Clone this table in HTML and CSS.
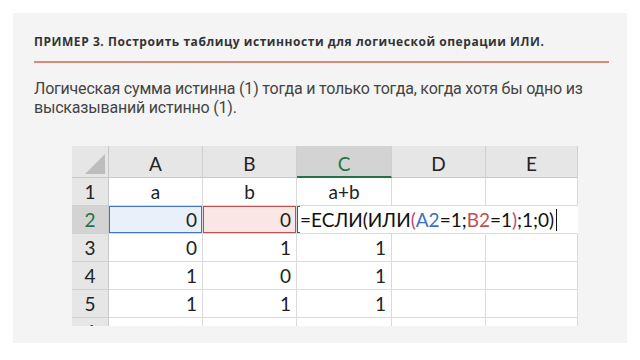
FILE: index.html
```html
<!DOCTYPE html>
<html lang="ru">
<head>
<meta charset="utf-8">
<link rel="stylesheet" href="styles.css">
</head>
<body>
<div class="panel">
  <h1 class="title">ПРИМЕР 3. Построить таблицу истинности для логической операции ИЛИ.</h1>
  <div class="rule"></div>
  <p class="text">Логическая сумма истинна (1) тогда и только тогда, когда хотя бы одно из высказываний истинно (1).</p>
  <div class="sheet">
    <div class="corner"><span class="tri"></span></div>
    <div class="ch">A</div>
    <div class="ch">B</div>
    <div class="ch ch-active">C</div>
    <div class="ch">D</div>
    <div class="ch">E</div>

    <div class="rh">1</div>
    <div class="c center">a</div>
    <div class="c center">b</div>
    <div class="c center">a+b</div>
    <div class="c"></div>
    <div class="c"></div>

    <div class="rh rh-active">2</div>
    <div class="c num ref-a">0</div>
    <div class="c num ref-b">0</div>
    <div class="c edit"><span class="formula">=ЕСЛИ(ИЛИ<span class="pr">(</span><span class="fa">A2</span>=1;<span class="fb">B2</span>=1<span class="pr">)</span>;1;0)<span class="caret"></span></span></div>
    <div class="c nogrid"></div>
    <div class="c nogrid"></div>

    <div class="rh">3</div>
    <div class="c num">0</div>
    <div class="c num">1</div>
    <div class="c num">1</div>
    <div class="c"></div>
    <div class="c"></div>

    <div class="rh">4</div>
    <div class="c num">1</div>
    <div class="c num">0</div>
    <div class="c num">1</div>
    <div class="c"></div>
    <div class="c"></div>

    <div class="rh">5</div>
    <div class="c num">1</div>
    <div class="c num">1</div>
    <div class="c num">1</div>
    <div class="c"></div>
    <div class="c"></div>

    <div class="rh">6</div>
    <div class="c"></div>
    <div class="c"></div>
    <div class="c"></div>
    <div class="c"></div>
    <div class="c"></div>
  </div>
</div>
</body>
</html>
```
FILE: styles.css
```css
html, body {
  margin: 0;
  padding: 0;
  background: #ffffff;
}
body {
  width: 640px;
  height: 360px;
  overflow: hidden;
}
.panel {
  margin: 13px 13px 0 13px;
  height: 330px;
  background: #f4f4f4;
  padding: 22px 18px 0 21px;
  box-sizing: border-box;
}
.title {
  margin: 0;
  font-family: "Open Sans", "Noto Sans", sans-serif;
  font-weight: 700;
  font-size: 12px;
  line-height: 14px;
  color: #333333;
  letter-spacing: 0.55px;
}
.rule {
  margin-top: 12px;
  height: 2px;
  background: #d98a7a;
}
.text {
  margin: 16px 0 0 0;
  font-family: Roboto, "Noto Sans", sans-serif;
  font-size: 16px;
  line-height: 19px;
  color: #444444;
  letter-spacing: -0.2px;
}
.sheet {
  margin: 29px 0 0 38px;
  display: grid;
  grid-template-columns: 37px 94px 94px 95px 94px 92px;
  grid-template-rows: 32px 28px 28px 28px 28px 28px 28px;
  height: 180px;
  width: 506px;
  overflow: hidden;
  background: #ffffff;
  font-family: Lato, "Open Sans", sans-serif;
  font-size: 19px;
  color: #222222;
}
.corner {
  background: #e6e6e6;
  border-right: 1px solid #c8c8c8;
  border-bottom: 1px solid #c8c8c8;
  position: relative;
}
.tri {
  position: absolute;
  right: 3px;
  bottom: 3px;
  width: 0;
  height: 0;
  border-left: 20px solid transparent;
  border-bottom: 20px solid #bdbdbd;
}
.ch {
  background: #e6e6e6;
  border-right: 1px solid #d0d0d0;
  border-bottom: 1px solid #c8c8c8;
  display: flex;
  align-items: center;
  justify-content: center;
  padding-top: 4px;
  color: #222222;
}
.ch-active {
  background: #d3d3d3;
  color: #217346;
  border-bottom: 2px solid #217346;
}
.rh {
  background: #e6e6e6;
  border-right: 1px solid #c8c8c8;
  border-bottom: 1px solid #d0d0d0;
  display: flex;
  align-items: center;
  justify-content: center;
  color: #222222;
}
.rh-active {
  background: #d3d3d3;
  color: #217346;
}
.c {
  border-right: 1px solid #dadada;
  border-bottom: 1px solid #dadada;
  display: flex;
  align-items: center;
  padding: 0 5px;
  min-width: 0;
}
.center {
  justify-content: center;
}
.num {
  justify-content: flex-end;
}
.ref-a {
  background: #e9f0fa;
  box-shadow: inset 0 0 0 1px #4472c4;
}
.ref-b {
  background: #fbe6e6;
  box-shadow: inset 0 0 0 1px #c0504d;
}
.edit {
  position: relative;
  overflow: visible;
  padding: 0 3px;
  box-shadow: inset 0 0 0 1px #217346;
  z-index: 2;
}
.formula {
  position: absolute;
  left: 3px;
  top: 0;
  bottom: 0;
  display: flex;
  align-items: center;
  white-space: nowrap;
  background: #ffffff;
  padding-right: 2px;
  font-size: 19px;
  color: #111111;
}
.nogrid {
  border-right-color: transparent;
}
.pr { color: #c04a75; }
.fa { color: #3d6fc2; }
.fb { color: #c0504d; }
.caret {
  display: inline-block;
  width: 1px;
  height: 22px;
  background: #111111;
  margin-left: 2px;
}
```
